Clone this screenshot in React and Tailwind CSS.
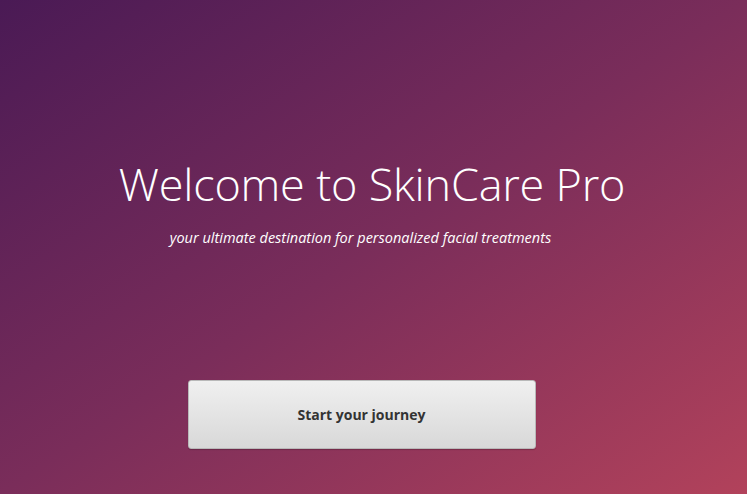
import React from 'react';

export default function App() {
  return (
    <div
      className="w-full h-[494px] overflow-hidden flex flex-col items-center bg-[linear-gradient(to_bottom_right,#4a1a55,#7a2d5a_50%,#b2425b)] text-white"
      style={{ fontFamily: '"Open Sans", "Noto Sans", sans-serif' }}
    >
      <h1 className="mt-[154px] mr-[3px] text-[45px] font-light leading-[60px] tracking-[-0.2px]">Welcome to SkinCare Pro</h1>
      <p className="mt-[14px] mr-[26px] text-[14.5px] italic leading-[20px]">your ultimate destination for personalized facial treatments</p>
      <button className="mt-[132px] mr-[24px] w-[348px] h-[69px] rounded-[3px] border border-[#b9b9b9] bg-[linear-gradient(to_bottom,#f0f0f0,#d8d8d8)] text-[14px] font-bold text-[#333333] shadow-[0_1px_1px_rgba(0,0,0,0.2)]">
        Start your journey
      </button>
    </div>
  );
}
